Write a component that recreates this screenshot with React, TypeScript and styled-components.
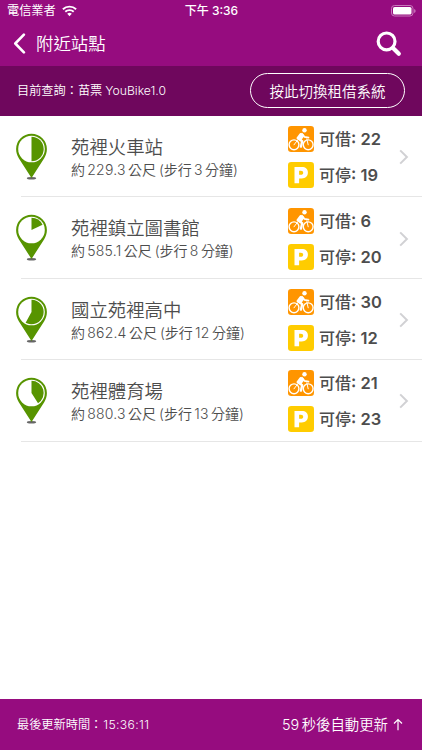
import React from "react";
import styled, { createGlobalStyle } from "styled-components";

const GlobalStyle = createGlobalStyle`
  * { box-sizing: border-box; }
  body { margin: 0; background: #fff; }
`;

const Screen = styled.div`
  width: 422px;
  height: 750px;
  display: flex;
  flex-direction: column;
  overflow: hidden;
  background: #fff;
  color: #4d4d4d;
  font-family: Inter, "Noto Sans CJK TC", sans-serif;
  white-space: nowrap;
`;

const StatusBar = styled.div`
  height: 22px;
  flex: none;
  display: grid;
  grid-template-columns: 1fr auto 1fr;
  align-items: center;
  padding: 0 6px 0 7px;
  background: #960c7f;
  color: #fff;
  font-size: 12.2px;
  line-height: 22px;
`;

const Carrier = styled.div`
  display: flex;
  align-items: center;
  gap: 6px;
`;

const Clock = styled.div`
  display: flex;
  gap: 3px;
  font-size: 12px;
  font-weight: 500;
`;

const BatterySlot = styled.div`
  display: flex;
  justify-content: flex-end;
`;

const NavBar = styled.div`
  height: 43.5px;
  flex: none;
  display: flex;
  align-items: center;
  padding: 0 20px 0 13px;
  background: #960c7f;
  color: #fff;
`;

const NavTitle = styled.h1`
  flex: 1;
  margin: 0 0 0 10px;
  font-size: 17.4px;
  font-weight: 350;
  line-height: 24px;
`;

const SystemBar = styled.div`
  height: 50.5px;
  flex: none;
  display: flex;
  align-items: center;
  justify-content: space-between;
  padding: 0 17px;
  background: #6f075d;
  color: #fff;
`;

const SmallText = styled.div`
  padding-top: 1px;
  font-size: 12.2px;
  font-weight: 350;
  line-height: 18px;
`;

const Time = styled.span`
  margin-left: 1px;
  letter-spacing: 0.35px;
`;

const Gap = styled.span<{ $w: number }>`
  display: inline-block;
  width: ${(p) => p.$w}px;
`;

const SwitchButton = styled.button`
  width: 155px;
  height: 35px;
  padding: 0;
  border: 1px solid #fff;
  border-radius: 18px;
  background: transparent;
  color: #fff;
  font: inherit;
  font-size: 14.5px;
  font-weight: 350;
`;

const List = styled.main`
  flex: 1;
`;

const Row = styled.div`
  height: 81.4px;
  display: flex;
  padding-left: 15px;
`;

const PinSlot = styled.div`
  width: 33px;
  padding-top: 17px;
`;

const RowBody = styled.div`
  flex: 1;
  display: flex;
  margin-left: -27px;
  padding-left: 50px;
  background: linear-gradient(#e6e6e6, #e6e6e6) bottom / 100% 1px no-repeat;
`;

const Info = styled.div`
  width: 217px;
  padding-top: 19px;
`;

const StationName = styled.div`
  font-size: 18.4px;
  font-weight: 350;
  line-height: 25px;
`;

const Distance = styled.div`
  font-size: 14px;
  font-weight: 350;
  line-height: 20px;
`;

const Digits = styled.span`
  margin: 0 2.3px;
  letter-spacing: 0.2px;
`;

const Counts = styled.div`
  width: 111px;
  padding-top: 10.3px;
  display: flex;
  flex-direction: column;
  gap: 10px;
`;

const Count = styled.div`
  height: 26px;
  display: flex;
  align-items: center;
  gap: 5px;
  font-size: 16.5px;
  font-weight: 600;
  line-height: 28px;
`;

const CountLabel = styled.span`
  font-size: 16px;
  font-weight: 500;
`;

const ArrowSlot = styled.div`
  padding-top: 33.3px;
`;

const Footer = styled.footer`
  height: 51.5px;
  flex: none;
  display: flex;
  align-items: center;
  justify-content: space-between;
  padding: 0 19px 0 17px;
  background: #960c7f;
  color: #fff;
`;

const Refresh = styled.div`
  display: flex;
  align-items: center;
  padding-top: 1px;
  font-size: 14.4px;
  font-weight: 350;
  line-height: 20px;
`;

const Icon = styled.svg`
  display: block;
  flex: none;
`;

const Wifi = () => (
  <Icon width="15" height="12" viewBox="0 0 15 12" fill="none" stroke="#fff" strokeWidth="1.9">
    <path d="M.9 4.3a9.4 9.4 0 0 1 13.2 0M3.3 6.8a6 6 0 0 1 8.4 0" />
    <path d="M5.2 8.8a3.3 3.3 0 0 1 4.6 0L7.5 11.3z" fill="#fff" stroke="none" />
  </Icon>
);

const Battery = () => (
  <Icon width="25" height="12" viewBox="0 0 25 12">
    <rect x=".5" y=".5" width="21.5" height="10.5" rx="3" fill="none" stroke="#c878bb" />
    <rect x="2" y="2" width="18.5" height="7.5" rx="1.6" fill="#fff" />
    <path d="M23.3 4v4q1.2-.6 1.2-2t-1.2-2z" fill="#d795cd" />
  </Icon>
);

const Back = () => (
  <Icon width="13" height="21" viewBox="0 0 13 21">
    <path d="M10.9 1.6 2.3 10.5l8.6 8.9" fill="none" stroke="#fff" strokeWidth="2.6" strokeLinecap="round" strokeLinejoin="round" />
  </Icon>
);

const Search = () => (
  <Icon width="26" height="26" viewBox="0 0 26 26" fill="none" stroke="#fff">
    <circle cx="10.6" cy="10.4" r="8.4" strokeWidth="3.2" />
    <path d="m17 17 5.8 5.8" strokeWidth="4.2" strokeLinecap="round" />
  </Icon>
);

const Pin = ({ share }: { share: number }) => {
  const angle = share * Math.PI * 2;
  const radius = 12.2;
  const x = 16.5 + radius * Math.sin(angle);
  const y = 16 - radius * Math.cos(angle);
  return (
    <Icon width="33" height="47" viewBox="0 0 33 47">
      <ellipse cx="16.5" cy="45.3" rx="4.7" ry="1.3" fill="#666" />
      <path d="M16.5.7A15.4 15.4 0 0 0 1.1 16.1c0 3.6 1 6.2 2.7 9.1L16.5 45l12.7-19.8c1.7-2.9 2.7-5.5 2.7-9.1A15.4 15.4 0 0 0 16.5.7z" fill="#579400" />
      <circle cx="16.5" cy="16" r="13.3" fill="#fff" />
      <path d={`M16.5 16V${16 - radius}A${radius} ${radius} 0 ${share > 0.5 ? 1 : 0} 1 ${x} ${y}z`} fill="#579400" />
    </Icon>
  );
};

const Bike = () => (
  <Icon width="26" height="26" viewBox="0 0 26 26" fill="none" stroke="#fff" strokeLinejoin="round" strokeLinecap="round">
    <rect width="26" height="26" rx="3.2" fill="#ff9500" stroke="none" />
    <circle cx="6" cy="18.8" r="4.9" strokeWidth="1.4" />
    <circle cx="20.2" cy="18.8" r="4.9" strokeWidth="1.4" />
    <circle cx="16.5" cy="4.2" r="2.2" fill="#fff" stroke="none" />
    <path d="m12.5 8-3 4.2 3.2 1.3 2.6-4z" fill="#fff" strokeWidth="2" />
    <path d="m10.2 12.5 4 2.8-1.3 5.4" strokeWidth="2.3" />
    <path d="m14 7.7 2.5 3.2 4 .8" strokeWidth="1.7" />
    <path d="m6 18.8 3.4-4.4M18.8 13l1.4 5.8" strokeWidth="1" />
  </Icon>
);

const Parking = () => (
  <Icon width="26" height="26" viewBox="0 0 26 26">
    <rect width="26" height="26" rx="3.2" fill="#ffcc00" />
    <path fillRule="evenodd" d="M6.5 5h7.2c4 0 6.2 2 6.2 5.6s-2.3 5.8-6.2 5.8h-2.6v4.9H6.5zM11.1 8.7v4.1h1.8c1.5 0 2.3-.8 2.3-2.1s-.8-2-2.3-2z" fill="#fff" />
  </Icon>
);

const Chevron = () => (
  <Icon width="11" height="16" viewBox="0 0 11 16">
    <path d="m1.2 1.4 6.7 6.6-6.7 6.6" fill="none" stroke="#d1d1d4" strokeWidth="2" />
  </Icon>
);

const ArrowUp = () => (
  <Icon width="10" height="14" viewBox="0 0 10 14">
    <path d="M5 12.3V1.5M1 5.5l4-4 4 4" fill="none" stroke="#fff" strokeWidth="1.2" />
  </Icon>
);

const stations = [
  { name: "苑裡火車站", meters: "229.3", minutes: "3", bikes: 22, docks: 19, share: 0.5 },
  { name: "苑裡鎮立圖書館", meters: "585.1", minutes: "8", bikes: 6, docks: 20, share: 0.18 },
  { name: "國立苑裡高中", meters: "862.4", minutes: "12", bikes: 30, docks: 12, share: 0.58 },
  { name: "苑裡體育場", meters: "880.3", minutes: "13", bikes: 21, docks: 23, share: 0.41 },
];

export default function App() {
  return (
    <Screen>
      <GlobalStyle />
      <StatusBar>
        <Carrier>電信業者<Wifi /></Carrier>
        <Clock><span>下午</span><span>3:36</span></Clock>
        <BatterySlot><Battery /></BatterySlot>
      </StatusBar>
      <NavBar>
        <Back />
        <NavTitle>附近站點</NavTitle>
        <Search />
      </NavBar>
      <SystemBar>
        <SmallText>目前查詢：苗票<Gap $w={3} />YouBike1.0</SmallText>
        <SwitchButton>按此切換租借系統</SwitchButton>
      </SystemBar>
      <List>
        {stations.map((s) => (
          <Row key={s.name}>
            <PinSlot><Pin share={s.share} /></PinSlot>
            <RowBody>
              <Info>
                <StationName>{s.name}</StationName>
                <Distance>
                  約<Digits>{s.meters}</Digits>公尺<Gap $w={3} />(步行<Digits>{s.minutes}</Digits>分鐘)
                </Distance>
              </Info>
              <Counts>
                <Count><Bike /><span><CountLabel>可借</CountLabel>: {s.bikes}</span></Count>
                <Count><Parking /><span><CountLabel>可停</CountLabel>: {s.docks}</span></Count>
              </Counts>
              <ArrowSlot><Chevron /></ArrowSlot>
            </RowBody>
          </Row>
        ))}
      </List>
      <Footer>
        <SmallText>最後更新時間：<Time>15:36:11</Time></SmallText>
        <Refresh>59<Gap $w={2.5} />秒後自動更新<Gap $w={5} /><ArrowUp /></Refresh>
      </Footer>
    </Screen>
  );
}
